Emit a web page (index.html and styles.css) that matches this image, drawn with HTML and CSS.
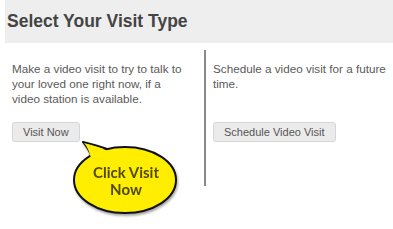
FILE: index.html
```html
<!DOCTYPE html>
<html lang="en">
<head>
    <meta charset="UTF-8">
    <meta name="viewport" content="width=device-width, initial-scale=1.0">
    <link rel="stylesheet" href="styles.css">
</head>
<body>
    <div class="header">
        <h1>Select Your Visit Type</h1>
    </div>

    <div class="visit-types">
        <!-- Visit right now -->
        <div class="visit-col">
            <p>Make a video visit to try to talk to your loved one right now, if a video station is available.</p>
            <button class="button">Visit Now</button>
        </div>
        <!-- Schedule for later -->
        <div class="visit-col divided">
            <p>Schedule a video visit for a future time.</p>
            <button class="button">Schedule Video Visit</button>
        </div>
    </div>

    <!-- Callout bubble -->
    <div class="callout">
        <svg width="115" height="85" viewBox="0 0 115 85">
            <path d="M22 22 C19 15 16 10 13 7 C21 9 29 11 37 14" fill="#ffee00" stroke="#111" stroke-width="2" stroke-linejoin="round"/>
            <ellipse cx="55" cy="45" rx="51" ry="33" fill="#ffee00" stroke="#111" stroke-width="2"/>
            <path d="M21 23 C19 15 16 10 14 8 C21 10 29 12 38 16 Z" fill="#ffee00"/>
        </svg>
        <div class="callout-text">Click Visit<br>Now</div>
    </div>
</body>
</html>
```

FILE: styles.css
```css
body {
    margin: 0;
    background-color: white;
    font-family: "Liberation Sans", Arial, sans-serif;
    color: #555;
}
.header {
    margin-left: 5px;
    height: 43px;
    background-color: #efeeef;
    display: flex;
    align-items: center;
}
h1 {
    margin: 0 0 1px 2px;
    font-size: 17.5px;
    font-weight: bold;
    color: #444;
}
.visit-types {
    display: flex;
    margin-top: 7px;
}
.visit-col {
    height: 136px;
    padding: 11px 0 0 12px;
    box-sizing: border-box;
}
.visit-col:first-child {
    width: 204px;
}
.divided {
    border-left: 2px solid #8a8a8a;
    padding-left: 7px;
    flex: 1;
}
p {
    margin: 0 0 16px 0;
    max-width: 176px;
    height: 45px;
    font-size: 11.7px;
    line-height: 15px;
    color: #5a5a5a;
}
.button {
    height: 20px;
    padding: 0 10px;
    background-color: #ebebeb;
    border: 1px solid #d6d6d6;
    border-radius: 3px;
    font-family: "Liberation Sans", Arial, sans-serif;
    font-size: 11px;
    color: #555;
    cursor: pointer;
}
.callout {
    position: absolute;
    left: 70px;
    top: 135px;
    width: 115px;
    height: 85px;
    filter: drop-shadow(1px 2px 1px rgba(0, 0, 0, 0.35));
}
.callout svg {
    display: block;
}
.callout-text {
    position: absolute;
    left: 5px;
    top: 29px;
    width: 102px;
    text-align: center;
    font-family: Lato, "Liberation Sans", sans-serif;
    font-size: 15px;
    font-weight: bold;
    line-height: 17px;
    color: #4f4a00;
}
```
